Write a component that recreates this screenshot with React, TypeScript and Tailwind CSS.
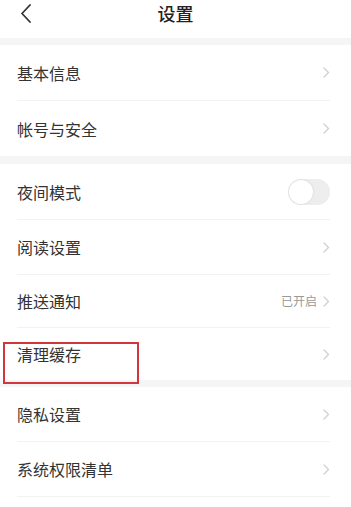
import React from "react";

const font = { fontFamily: '"Noto Sans CJK SC", "Noto Sans", sans-serif' };

function Chevron() {
  return (
    <svg width="7" height="11" viewBox="0 0 7 11" className="shrink-0">
      <path d="M1 1 L5.5 5.5 L1 10" fill="none" stroke="#cfcfcf" strokeWidth="1.2" strokeLinecap="round" strokeLinejoin="round" />
    </svg>
  );
}

function Row({
  label,
  right,
  divider = true,
  h = "h-[55px]",
  children,
}: {
  label: string;
  right?: React.ReactNode;
  divider?: boolean;
  h?: string;
  children?: React.ReactNode;
}) {
  return (
    <div className={`relative ${h} bg-white pl-[17px] pr-[21px]`}>
      <div className={`flex h-full items-center justify-between ${divider ? "border-b border-[#f2f2f2]" : ""}`}>
        <span className="text-[16px] text-[#333333] leading-none">{label}</span>
        {right ?? <Chevron />}
      </div>
      {children}
    </div>
  );
}

export default function App() {
  return (
    <div className="w-[351px] h-[507px] overflow-hidden bg-white" style={font}>
      <div className="relative flex h-[38px] items-start justify-center bg-white">
        <svg width="14" height="20" viewBox="0 0 14 20" className="absolute left-[19px] top-[3px]">
          <path d="M11 2 L3 10.5 L11 19" fill="none" stroke="#333333" strokeWidth="1.8" strokeLinecap="round" strokeLinejoin="round" />
        </svg>
        <span className="text-[18px] font-medium text-[#222222] leading-[26px]">设置</span>
      </div>
      <div className="h-[7px] bg-[#f5f5f5]" />
      <Row label="基本信息" h="h-[56px]" />
      <Row label="帐号与安全" divider={false} />
      <div className="h-[8px] bg-[#f5f5f5]" />
      <Row
        label="夜间模式"
        h="h-[56px]"
        right={
          <div className="flex h-[26px] w-[42px] items-center rounded-full bg-[#ededed] px-[1px]">
            <div className="h-[24px] w-[24px] rounded-full bg-white shadow-[0_0_2px_rgba(0,0,0,0.15)]" />
          </div>
        }
      />
      <Row label="阅读设置" />
      <Row
        label="推送通知"
        h="h-[53px]"
        right={
          <div className="flex items-center gap-[6px]">
            <span className="text-[12px] text-[#999999] leading-none">已开启</span>
            <Chevron />
          </div>
        }
      />
      <Row label="清理缓存" divider={false} h="h-[52px]">
        <div className="absolute left-[3px] top-[14px] h-[42px] w-[136px] border-2 border-[#d2353b] z-10" />
      </Row>
      <div className="h-[7px] bg-[#f5f5f5]" />
      <Row label="隐私设置" />
      <Row label="系统权限清单" />
      <div className="h-[20px] bg-white" />
    </div>
  );
}
